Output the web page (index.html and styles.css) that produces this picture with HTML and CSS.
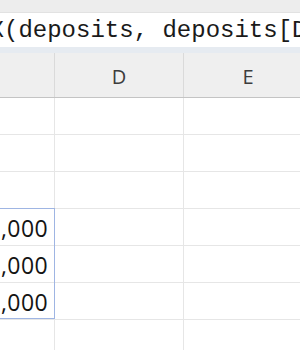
FILE: index.html
```html
<!DOCTYPE html>
<html>
<head>
<meta charset="utf-8">
<link rel="stylesheet" href="styles.css">
</head>
<body>
<div class="app">
  <div class="topstrip"></div>
  <div class="formula"><span class="ftext">X(deposits, deposits[Date]</span></div>
  <div class="band"></div>
  <div class="sheet">
    <div class="row header">
      <div class="cell colc"></div>
      <div class="cell">D</div>
      <div class="cell">E</div>
    </div>
    <div class="row"><div class="cell colc"></div><div class="cell"></div><div class="cell"></div></div>
    <div class="row"><div class="cell colc"></div><div class="cell"></div><div class="cell"></div></div>
    <div class="row"><div class="cell colc"></div><div class="cell"></div><div class="cell"></div></div>
    <div class="row"><div class="cell colc num">$5,000</div><div class="cell"></div><div class="cell"></div></div>
    <div class="row"><div class="cell colc num">$2,000</div><div class="cell"></div><div class="cell"></div></div>
    <div class="row"><div class="cell colc num">$3,000</div><div class="cell"></div><div class="cell"></div></div>
    <div class="row"><div class="cell colc"></div><div class="cell"></div><div class="cell"></div></div>
    <div class="selection"></div>
  </div>
</div>
</body>
</html>
```
FILE: styles.css
```css
html, body {
  margin: 0;
  padding: 0;
  background: #ffffff;
}
.app {
  width: 300px;
  height: 350px;
  overflow: hidden;
  position: relative;
}
.topstrip {
  height: 12px;
  background: #ededed;
  border-bottom: 1px solid #e2e2e2;
}
.formula {
  height: 34px;
  background: #ffffff;
  white-space: nowrap;
  overflow: hidden;
  font-family: "Liberation Mono", monospace;
  font-size: 24px;
  line-height: 36px;
  color: #1a1a1a;
}
.ftext {
  display: inline-block;
  margin-left: -10.4px;
}
.band {
  height: 6px;
  background: #e6ebf1;
}
.sheet {
  position: relative;
  margin-left: -66px;
}
.row {
  display: grid;
  grid-template-columns: 121px 129px 129px;
  height: 37px;
  box-sizing: border-box;
  border-bottom: 1px solid #e6e6e6;
}
.row.header {
  height: 45px;
  background: #efefef;
  border-bottom: 1px solid #c4c4c4;
  font-family: "Open Sans", "Liberation Sans", sans-serif;
  font-size: 20px;
  color: #3c3c3c;
}
.cell {
  box-sizing: border-box;
  border-right: 1px solid #e6e6e6;
  display: flex;
  align-items: center;
  justify-content: center;
  padding-top: 2px;
}
.header .cell {
  border-right-color: #dadada;
}
.num {
  justify-content: flex-end;
  padding-right: 6px;
  font-family: "Open Sans", "Liberation Sans", sans-serif;
  font-size: 23px;
  letter-spacing: 0.4px;
  color: #141414;
}
.selection {
  position: absolute;
  left: 0;
  top: 155px;
  width: 121px;
  height: 111px;
  box-sizing: border-box;
  border: 1px solid #9fb5e3;
  pointer-events: none;
}
```
